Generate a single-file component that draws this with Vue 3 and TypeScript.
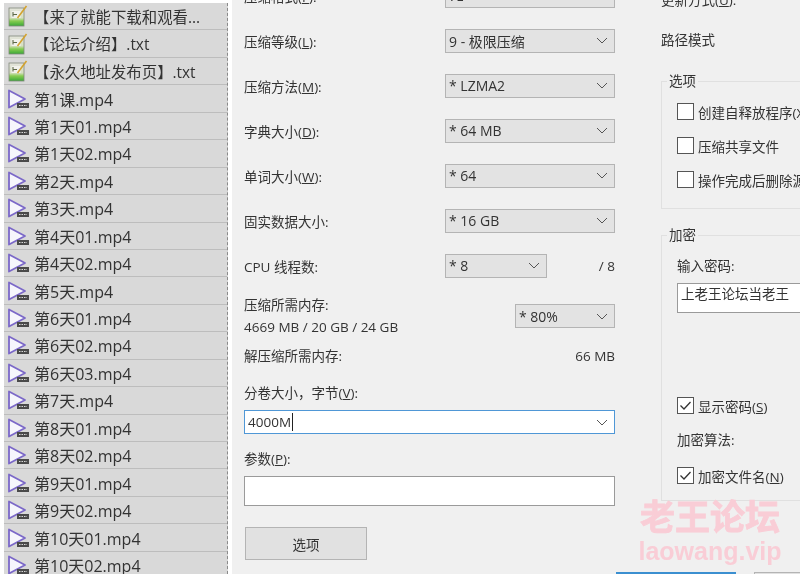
<script setup lang="ts">
const files: { name: string; kind: 'txt' | 'video' }[] = [
  { name: '【来了就能下载和观看...', kind: 'txt' },
  { name: '【论坛介绍】.txt', kind: 'txt' },
  { name: '【永久地址发布页】.txt', kind: 'txt' },
  ...['第1课', '第1天01', '第1天02', '第2天', '第3天', '第4天01', '第4天02', '第5天', '第6天01', '第6天02', '第6天03', '第7天', '第8天01', '第8天02', '第9天01', '第9天02', '第10天01', '第10天02'].map((n) => ({
    name: n + '.mp4',
    kind: 'video' as const,
  })),
]

const selects: { label: string; key: string; tail: string; value: string }[] = [
  { label: '压缩格式(', key: 'F', tail: '):', value: '7z' },
  { label: '压缩等级(', key: 'L', tail: '):', value: '9 - 极限压缩' },
  { label: '压缩方法(', key: 'M', tail: '):', value: '* LZMA2' },
  { label: '字典大小(', key: 'D', tail: '):', value: '* 64 MB' },
  { label: '单词大小(', key: 'W', tail: '):', value: '* 64' },
  { label: '固实数据大小:', key: '', tail: '', value: '* 16 GB' },
]
</script>

<template>
  <div class="page">
    <ul class="files">
      <li v-for="f in files" :key="f.name" class="file" :class="f.kind">
        <span class="icon">
          <svg v-if="f.kind === 'txt'" width="20" height="22" viewBox="0 0 20 22">
            <defs>
              <linearGradient id="note" x1="0" y1="0" x2="0" y2="1">
                <stop offset="0" stop-color="#e4e4dc" />
                <stop offset="0.55" stop-color="#d6dfc0" />
                <stop offset="0.72" stop-color="#86cc50" />
                <stop offset="1" stop-color="#3aa838" />
              </linearGradient>
            </defs>
            <rect x="1" y="3" width="15" height="18" fill="url(#note)" stroke="#80887a" stroke-width="0.8" />
            <rect x="3.5" y="6" width="9" height="7" fill="#f2f2ec" />
            <path d="M5 7v4.5M5 9.5h4" stroke="#5f6a48" stroke-width="1.1" fill="none" />
            <path d="M9.5 13 L18.5 1" stroke="#d3a22e" stroke-width="1.6" fill="none" />
          </svg>
          <svg v-else width="24" height="20" viewBox="0 0 24 20">
            <path d="M1 1.5 L17 10 L1 18.5 Z" fill="#f6f6fc" stroke="#7b68c8" stroke-width="1.8" stroke-linejoin="round" />
            <rect x="9" y="14" width="12" height="5" fill="#4a4a4a" />
            <path d="M11 16.5h8" stroke="#d8d8d8" stroke-width="1" stroke-dasharray="1.5 1" />
          </svg>
        </span>
        <span class="fname">{{ f.name }}</span>
      </li>
    </ul>

    <main class="dialog">
      <section class="left">
        <div v-for="s in selects" :key="s.label" class="row">
          <span class="label">{{ s.label }}<u v-if="s.key">{{ s.key }}</u>{{ s.tail }}</span>
          <div class="select wide">
            <span>{{ s.value }}</span>
            <svg class="chev" width="12" height="7" viewBox="0 0 12 7"><path d="M1 1l5 5 5-5" fill="none" stroke="#555" stroke-width="1" /></svg>
          </div>
        </div>

        <div class="row">
          <span class="label">CPU 线程数:</span>
          <div class="select cpu">
            <span>* 8</span>
            <svg class="chev" width="12" height="7" viewBox="0 0 12 7"><path d="M1 1l5 5 5-5" fill="none" stroke="#555" stroke-width="1" /></svg>
          </div>
          <span class="push">/ 8</span>
        </div>

        <div class="mem">
          <div class="memtext">
            <span>压缩所需内存:</span>
            <span>4669 MB / 20 GB / 24 GB</span>
          </div>
          <div class="select pct">
            <span>* 80%</span>
            <svg class="chev" width="12" height="7" viewBox="0 0 12 7"><path d="M1 1l5 5 5-5" fill="none" stroke="#555" stroke-width="1" /></svg>
          </div>
        </div>

        <div class="unpack">
          <span>解压缩所需内存:</span>
          <span>66 MB</span>
        </div>

        <div class="cap vol">分卷大小，字节(<u>V</u>):</div>
        <div class="volume">
          <span class="typed">4000M</span>
          <svg class="chev" width="12" height="7" viewBox="0 0 12 7"><path d="M1 1l5 5 5-5" fill="none" stroke="#555" stroke-width="1" /></svg>
        </div>
        <div class="cap par">参数(<u>P</u>):</div>
        <div class="params"></div>
        <button class="btn" type="button">选项</button>
      </section>

      <section class="right">
        <div class="plain first">更新方式(<u>U</u>):</div>
        <div class="plain second">路径模式</div>

        <div class="group options">
          <span class="legend">选项</span>
          <label class="check"><span class="box"></span><span>创建自释放程序(X)</span></label>
          <label class="check"><span class="box"></span><span>压缩共享文件</span></label>
          <label class="check"><span class="box"></span><span>操作完成后删除源文件</span></label>
        </div>

        <div class="group crypt">
          <span class="legend">加密</span>
          <div class="pwlabel">输入密码:</div>
          <div class="pw">上老王论坛当老王</div>
          <label class="check show">
            <span class="box"><svg width="15" height="15" viewBox="0 0 15 15"><path d="M2.5 7.5l3.5 3.5 6.5-7" fill="none" stroke="#333" stroke-width="1.3" /></svg></span>
            <span>显示密码(<u>S</u>)</span>
          </label>
          <div class="algo">加密算法:</div>
          <label class="check names">
            <span class="box"><svg width="15" height="15" viewBox="0 0 15 15"><path d="M2.5 7.5l3.5 3.5 6.5-7" fill="none" stroke="#333" stroke-width="1.3" /></svg></span>
            <span>加密文件名(<u>N</u>)</span>
          </label>
        </div>

        <div class="actions">
          <span class="primary"></span>
          <span class="secondary"></span>
        </div>
      </section>
    </main>

    <div class="mark">
      <span class="mark-cn">老王论坛</span>
      <span class="mark-en">laowang.vip</span>
    </div>
  </div>
</template>

<style>
html, body { margin: 0; background: #fff; overflow: hidden; }
</style>

<style scoped>
.page {
  position: relative;
  width: 800px;
  height: 574px;
  overflow: hidden;
  display: flex;
  background: #fff;
  color: #333;
  font-family: "Open Sans", "Noto Sans CJK SC", sans-serif;
  font-size: 13.5px;
  filter: blur(0.4px);
}
.files {
  flex: none;
  list-style: none;
  margin: 3px 0 0 4px;
  padding: 0;
  width: 224px;
  background: #d9d9d9;
  border-right: 1px dashed #8a8a8a;
  box-sizing: border-box;
  align-self: flex-start;
}
.file {
  height: 27.45px;
  box-sizing: border-box;
  display: flex;
  align-items: center;
  border-bottom: 1px solid #bdbdbd;
  font-size: 16px;
}
.file.txt { font-size: 15.4px; }
.icon {
  flex: none;
  width: 30px;
  padding-left: 4px;
  box-sizing: border-box;
  display: flex;
  align-items: center;
}
.fname { white-space: nowrap; }
.dialog {
  flex: none;
  width: 568px;
  margin-left: 4px;
  display: flex;
  background: #f0f0f0;
  padding-left: 12px;
  box-sizing: border-box;
}
.left {
  flex: none;
  width: 371px;
  margin-top: -17px;
  display: flex;
  flex-direction: column;
}
.row {
  height: 25px;
  margin-bottom: 20px;
  display: flex;
  align-items: center;
}
.label { flex: none; width: 201px; }
.select {
  height: 24px;
  box-sizing: border-box;
  background: #e3e3e3;
  border: 1px solid #b4b4b4;
  display: flex;
  align-items: center;
  justify-content: space-between;
  padding: 0 6px 0 3px;
  white-space: pre;
  font-size: 14px;
}
.wide { width: 170px; }
.cpu { width: 102px; }
.pct { width: 100px; }
.push { margin-left: auto; }
.mem {
  display: flex;
  justify-content: space-between;
  align-items: center;
  margin-top: -4px;
}
.memtext {
  display: flex;
  flex-direction: column;
  line-height: 22px;
}
.unpack {
  display: flex;
  justify-content: space-between;
  margin-top: 8px;
  line-height: 20px;
}
.cap { line-height: 20px; }
.vol { margin-top: 17px; }
.volume {
  margin-top: 7px;
  height: 24px;
  box-sizing: border-box;
  background: #fff;
  border: 1px solid #4f97d6;
  display: flex;
  align-items: center;
  justify-content: space-between;
  padding: 0 6px 0 3px;
}
.typed {
  border-right: 1px solid #222;
  line-height: 18px;
  padding-right: 1px;
}
.par { margin-top: 15px; }
.params {
  margin-top: 7px;
  height: 30px;
  box-sizing: border-box;
  background: #fff;
  border: 1px solid #9a9a9a;
}
.btn {
  margin: 21px 0 0 1px;
  width: 122px;
  height: 33px;
  background: #e1e1e1;
  border: 1px solid #b4b4b4;
  color: #333;
  font: inherit;
}
.right {
  flex: none;
  width: 200px;
  margin-left: 46px;
  position: relative;
}
.plain { line-height: 20px; }
.first { margin-top: -10px; }
.second { margin-top: 20px; }
.group {
  position: relative;
  width: 220px;
  box-sizing: border-box;
  border: 1px solid #e0e0e0;
  padding-left: 15px;
}
.legend {
  position: absolute;
  left: 5px;
  top: -11px;
  padding: 0 2px;
  line-height: 20px;
  background: #f0f0f0;
}
.options {
  margin-top: 31px;
  height: 128px;
  padding-top: 21px;
}
.check {
  display: flex;
  align-items: center;
  gap: 4px;
  height: 17px;
  white-space: nowrap;
}
.options .check { margin-bottom: 17px; }
.box {
  flex: none;
  width: 17px;
  height: 17px;
  box-sizing: border-box;
  background: #fff;
  border: 1px solid #555;
  display: flex;
  align-items: center;
  justify-content: center;
}
.crypt {
  margin-top: 26px;
  height: 266px;
}
.pwlabel { margin-top: 20px; line-height: 20px; }
.pw {
  margin-top: 7px;
  width: 200px;
  height: 30px;
  box-sizing: border-box;
  background: #fff;
  border: 1px solid #9a9a9a;
  padding: 0 3px;
  line-height: 20px;
}
.show { margin-top: 84px; }
.algo { margin-top: 16px; line-height: 20px; }
.names { margin-top: 17px; }
.actions {
  display: flex;
  gap: 18px;
  margin: 71px 0 0 -45px;
}
.primary {
  flex: none;
  width: 120px;
  height: 20px;
  box-sizing: border-box;
  background: #e1e1e1;
  border: 2px solid #3b8fd0;
}
.secondary {
  flex: none;
  width: 120px;
  height: 20px;
  box-sizing: border-box;
  background: #e1e1e1;
  border: 1px solid #b4b4b4;
}
.mark {
  position: absolute;
  left: 638px;
  top: 497px;
  width: 144px;
  display: flex;
  flex-direction: column;
  align-items: center;
  color: #f9cdd6;
  font-weight: 700;
  pointer-events: none;
}
.mark-cn { font-size: 35px; line-height: 40px; -webkit-text-stroke: 0.8px #f9cdd6; }
.mark-en { font-size: 25px; line-height: 28px; font-family: "Liberation Sans", sans-serif; }
</style>
